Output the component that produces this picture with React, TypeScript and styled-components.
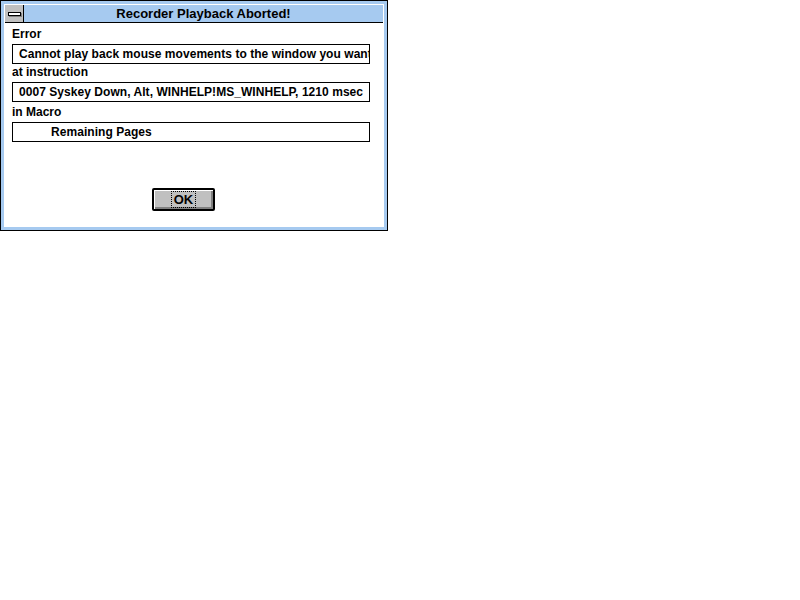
import React from "react";
import styled, { createGlobalStyle } from "styled-components";

const Global = createGlobalStyle`
  html, body { margin: 0; padding: 0; background: #ffffff; }
  body { font-family: "Liberation Sans", Arial, sans-serif; }
`;

const FRAME = "#a6caf0";

const Window = styled.div`
  box-sizing: border-box;
  width: 388px;
  height: 231px;
  border: 1px solid #000;
  background: ${FRAME};
  padding: 3px;
  display: flex;
`;

const Inner = styled.div`
  flex: 1;
  display: flex;
  flex-direction: column;
  border: 1px solid #fff;
  background: #fff;
`;

const TitleBar = styled.div`
  display: flex;
  height: 17px;
  background: ${FRAME};
  border-bottom: 1px solid #000;
`;

const SysMenu = styled.div`
  width: 18px;
  background: #c0c0c0;
  border-right: 1px solid #000;
  display: flex;
  align-items: center;
  justify-content: center;
`;

const SysDash = styled.div`
  box-sizing: border-box;
  width: 13px;
  height: 4px;
  border: 1px solid #000;
  background: #fff;
  box-shadow: 1px 1px 0 #808080;
`;

const Title = styled.div`
  flex: 1;
  display: flex;
  align-items: center;
  justify-content: center;
  font-weight: bold;
  font-size: 13px;
  color: #000;
`;

const Client = styled.div`
  flex: 1;
  display: flex;
  flex-direction: column;
  padding: 3px 0 0 7px;
`;

const Label = styled.div<{ $gap?: number }>`
  font-weight: bold;
  font-size: 12px;
  line-height: 16px;
  height: 16px;
  margin-top: ${(p) => p.$gap ?? 0}px;
  margin-bottom: 2px;
`;

const Field = styled.div<{ $indent?: number }>`
  box-sizing: border-box;
  width: 358px;
  height: 20px;
  border: 1px solid #000;
  padding-left: ${(p) => p.$indent ?? 6}px;
  font-weight: bold;
  font-size: 12px;
  letter-spacing: 0.05px;
  line-height: 18px;
  white-space: nowrap;
  overflow: hidden;
`;

const ButtonRow = styled.div`
  display: flex;
  padding-left: 140px;
  margin-top: 46px;
`;

const Button = styled.div`
  box-sizing: border-box;
  width: 63px;
  height: 23px;
  border: 2px solid #000;
  border-radius: 2px;
  background: #c0c0c0;
  box-shadow: inset 1px 1px 0 #fff, inset -2px -2px 0 #808080;
  display: flex;
  align-items: center;
  justify-content: center;
`;

const Focus = styled.span`
  font-weight: bold;
  font-size: 13px;
  line-height: 13px;
  padding: 1px 2px;
  outline: 1px dotted #000;
`;

export default function App() {
  return (
    <>
      <Global />
      <Window>
        <Inner>
          <TitleBar>
            <SysMenu>
              <SysDash />
            </SysMenu>
            <Title>Recorder Playback Aborted!</Title>
          </TitleBar>
          <Client>
            <Label>Error</Label>
            <Field>Cannot play back mouse movements to the window you want</Field>
            <Label>at instruction</Label>
            <Field>0007 Syskey Down, Alt, WINHELP!MS_WINHELP, 1210 msec</Field>
            <Label $gap={2}>in Macro</Label>
            <Field $indent={38}>Remaining Pages</Field>
            <ButtonRow>
              <Button>
                <Focus>OK</Focus>
              </Button>
            </ButtonRow>
          </Client>
        </Inner>
      </Window>
    </>
  );
}
